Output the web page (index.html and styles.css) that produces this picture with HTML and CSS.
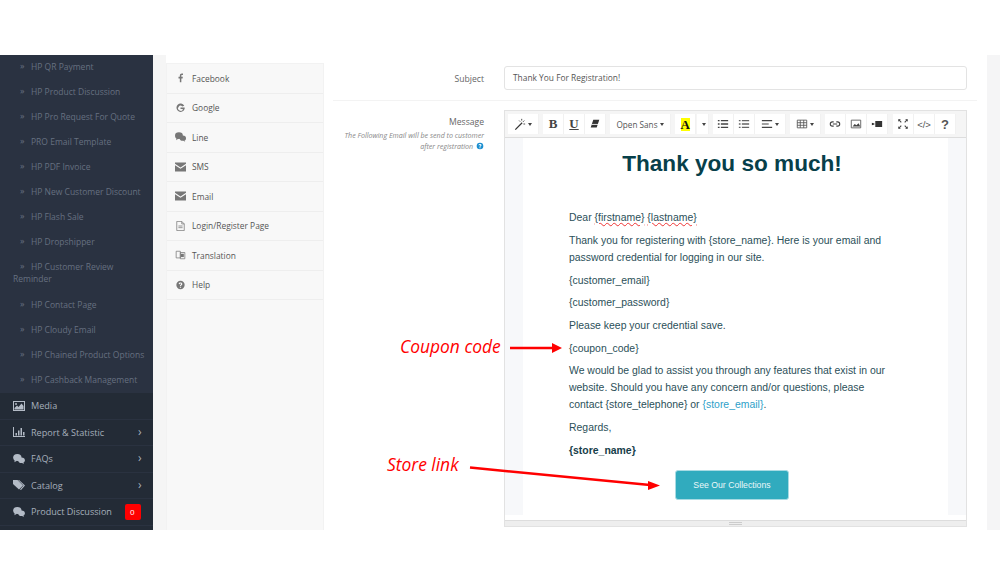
FILE: index.html
```html
<!DOCTYPE html>
<html lang="en">
<head>
<meta charset="utf-8">
<title>Email template</title>
<link rel="stylesheet" href="styles.css">
</head>
<body>
<svg width="0" height="0" class="defs">
  <symbol id="i-mail" viewBox="0 0 12 10"><path d="M0 1.500V0h12v1.500L6 5.500zM0 3l6 4 6-4v7H0z" fill="currentColor"/></symbol>
  <symbol id="i-chat" viewBox="0 0 14 12"><ellipse cx="5" cy="4.300" rx="5" ry="4.200" fill="currentColor"/><path d="M2 7l-.5 3 3-2z" fill="currentColor"/><ellipse cx="10" cy="7.500" rx="4" ry="3.400" fill="currentColor"/><path d="M12 10l1 2-3-1.500z" fill="currentColor"/></symbol>
  <symbol id="i-help" viewBox="0 0 12 12"><path fill-rule="evenodd" d="M6 1a5 5 0 1 0 0 10A5 5 0 0 0 6 1zM5.200 8h1.500v1.300H5.200zM3.800 4.800C3.900 3.500 4.800 3 6 3c1.300 0 2.200.7 2.200 1.800 0 1.500-1.600 1.400-1.600 2.500H5.300c0-1.800 1.400-1.700 1.400-2.500 0-.4-.3-.6-.7-.6-.5 0-.8.3-.8.8z" fill="currentColor"/></symbol>
</svg>
<div class="app">
  <nav class="sidebar">
    <ul class="sub">
      <li>HP QR Payment</li>
      <li>HP Product Discussion</li>
      <li>HP Pro Request For Quote</li>
      <li>PRO Email Template</li>
      <li>HP PDF Invoice</li>
      <li>HP New Customer Discount</li>
      <li>HP Flash Sale</li>
      <li>HP Dropshipper</li>
      <li class="two">HP Customer Review Reminder</li>
      <li>HP Contact Page</li>
      <li>HP Cloudy Email</li>
      <li>HP Chained Product Options</li>
      <li>HP Cashback Management</li>
    </ul>
    <ul class="top">
      <li><svg class="ti" viewBox="0 0 12 10"><path fill-rule="evenodd" d="M0 0h12v10H0zM1 1v8h10V1z" fill="currentColor"/><path d="M1.500 8.500V7L4 4.500 5.500 6l3-3.500 2 2.500v3.500z" fill="currentColor"/><circle cx="3" cy="3" r="1" fill="currentColor"/></svg>Media</li>
      <li><svg class="ti" viewBox="0 0 12 10"><path d="M0 0h1v9h11v1H0zM2.500 6h1.500v2.500H2.500zM5 3.500h1.500v5H5zM7.500 1h1.500v7.500H7.500zM10 5h1.500v3.500H10z" fill="currentColor"/></svg>Report &amp; Statistic<span class="chev">›</span></li>
      <li><svg class="ti"><use href="#i-chat"/></svg>FAQs<span class="chev">›</span></li>
      <li><svg class="ti" viewBox="0 0 12 10"><path d="M0 0h4.500L10 5.500 6 9.500 0 4z" fill="currentColor"/><path d="M6 0l6 5.500L8 10l-1-.5 3.500-4L5 0z" fill="currentColor"/></svg>Catalog<span class="chev">›</span></li>
      <li><svg class="ti"><use href="#i-chat"/></svg>Product Discussion<span class="badge">0</span></li>
    </ul>
  </nav>
  <div class="gutter">
    <ul class="tabs">
      <li><svg class="tic" viewBox="0 0 12 12"><path d="M7 11V6.500h1.500l.3-1.900H7V3.300c0-.6.2-1 1-1h1V.6C8.700.5 8.200.5 7.600.5 6.200.5 5.200 1.400 5.200 3v1.600H3.600v1.900h1.600V11z" fill="currentColor"/></svg>Facebook</li>
      <li><svg class="tic" viewBox="0 0 12 12"><path d="M10.500 3.200A5 5 0 1 0 11 7V5.300H6v1.900h3a3 3 0 1 1-.8-3z" fill="currentColor"/></svg>Google</li>
      <li><svg class="tic"><use href="#i-chat"/></svg>Line</li>
      <li><svg class="tic"><use href="#i-mail"/></svg>SMS</li>
      <li><svg class="tic"><use href="#i-mail"/></svg>Email</li>
      <li><svg class="tic" viewBox="0 0 12 12"><path d="M1.500.5h6l3 3v8h-9zM7.500.5v3h3M3.500 6h5M3.500 8h5" fill="none" stroke="currentColor" stroke-width=".9"/></svg>Login/Register Page</li>
      <li><svg class="tic" viewBox="0 0 12 12"><path d="M.8 1.500h5v8h-5zM5.800 3h5.400v7.500H5.800z" fill="none" stroke="currentColor" stroke-width=".9"/><rect x="6.500" y="4.500" width="3.500" height="4" fill="currentColor"/></svg>Translation</li>
      <li><svg class="tic"><use href="#i-help"/></svg>Help</li>
    </ul>
  </div>
  <main class="main">
    <div class="row row-subject">
      <label class="label">Subject</label>
      <div class="input">Thank You For Registration!</div>
    </div>
    <hr class="rule">
    <div class="row">
      <div class="label">
        Message
        <div class="hint">The Following Email will be send to customer after registration <svg class="q"><use href="#i-help"/></svg></div>
      </div>
      <div class="editor">
        <div class="toolbar">
          <div class="grp"><span class="btn w31"><svg class="bi" viewBox="0 0 14 14"><path d="M1 13l8-8 1 1-8 8z" fill="#333"/><path d="M9 1v2M12 3l-1.500 1.500M13 7h-2M6 3l1.200 1.200" stroke="#333"/></svg><i class="car"></i></span></div>
          <div class="grp"><span class="btn w21 big">B</span><span class="btn w21 big und">U</span><span class="btn w21"><svg class="bi" viewBox="0 0 14 14"><path d="M5 2h7l-3 9H2z" fill="#333"/><path d="M3 7.500h7.500" stroke="#fff"/></svg></span></div>
          <div class="grp"><span class="btn w61 font">Open Sans<i class="car"></i></span></div>
          <div class="grp grp-color"><span class="btn w21"><span class="hl">A</span></span><span class="btn w12"><i class="car"></i></span></div>
          <div class="grp">
            <span class="btn w21"><svg class="bi" viewBox="0 0 14 14"><path d="M1 3h2M1 7h2M1 11h2M4.500 3H13M4.500 7H13M4.500 11H13" stroke="#444" stroke-width="1.500"/></svg></span>
            <span class="btn w21"><svg class="bi" viewBox="0 0 14 14"><path d="M1 3h2M1 7h2M1 11h2M4.500 3H13M4.500 7H13M4.500 11H13" stroke="#666" stroke-width="1.500"/></svg></span>
            <span class="btn w31"><svg class="bi" viewBox="0 0 14 14"><path d="M1 3h12M1 7h8M1 11h12" stroke="#444" stroke-width="1.300"/></svg><i class="car"></i></span>
          </div>
          <div class="grp"><span class="btn w31"><svg class="bi" viewBox="0 0 14 14"><path d="M1.500 2.500h11v9h-11zM1.500 5.500h11M1.500 8.500h11M5 2.500v9M9 2.500v9" fill="none" stroke="#555"/></svg><i class="car"></i></span></div>
          <div class="grp">
            <span class="btn w21"><svg class="bi" viewBox="0 0 14 14"><path d="M5.500 4.500H4a2.500 2.500 0 0 0 0 5h1.500M8.500 4.500H10a2.500 2.500 0 0 1 0 5H8.500M4.500 7h5" fill="none" stroke="#444" stroke-width="1.300"/></svg></span>
            <span class="btn w21"><svg class="bi" viewBox="0 0 14 14"><path d="M1.500 2.500h11v9h-11z" fill="none" stroke="#555"/><path d="M3 10l2.500-3 2 1.500L10 6l2 4z" fill="#444"/></svg></span>
            <span class="btn w21"><svg class="bi" viewBox="0 0 14 14"><path d="M5 3.500h8v7H5zM1 5.500l3 1v1l-3 1z" fill="#333"/></svg></span>
          </div>
          <div class="grp grp-last">
            <span class="btn w21"><svg class="bi" viewBox="0 0 14 14"><path d="M2 2l3 3M12 2L9 5M2 12l3-3M12 12L9 9" stroke="#444" stroke-width="1.300"/><path d="M1.500 1.500h3l-3 3zM12.500 1.500h-3l3 3zM1.500 12.500h3l-3-3zM12.500 12.500h-3l3-3z" fill="#444"/></svg></span>
            <span class="btn w21 code">&lt;/&gt;</span>
            <span class="btn w21 help">?</span>
          </div>
        </div>
        <div class="canvas">
          <div class="strip"></div>
          <article class="mail">
            <h1 class="mail-title">Thank you so much!</h1>
            <p>Dear <span class="sp">{firstname}</span> <span class="sp">{lastname}</span></p>
            <p>Thank you for registering with {store_name}. Here is your email and password credential for logging in our site.</p>
            <p>{customer_email}</p>
            <p>{customer_password}</p>
            <p>Please keep your credential save.</p>
            <p>{coupon_code}</p>
            <p>We would be glad to assist you through any features that exist in our website. Should you have any concern and/or questions, please contact {store_telephone} or <a class="lnk">{store_email}</a>.</p>
            <p>Regards,</p>
            <p><strong>{store_name}</strong></p>
            <div class="cta-wrap"><a class="cta">See Our Collections</a></div>
          </article>
          <div class="strip"></div>
        </div>
        <div class="status"><i class="grip"></i></div>
      </div>
    </div>
  </main>
  <div class="edge"></div>
</div>
<div class="note note-coupon">Coupon code</div>
<div class="note note-store">Store link</div>
<svg class="arrows" viewBox="0 0 1000 585">
  <path d="M510 348H552" stroke="#f00" stroke-width="2.500"/>
  <path d="M552 343l10 5-10 5z" fill="#f00"/>
  <path d="M470 467.500L650 485" stroke="#f00" stroke-width="2.500"/>
  <path d="M648 481l12 4.500-12 4.500z" fill="#f00"/>
</svg>
</body>
</html>
```
FILE: styles.css
```css
* { box-sizing: border-box; }
html, body { margin: 0; padding: 0; background: #fff; }
body { width: 1000px; height: 585px; overflow: hidden; position: relative; padding-top: 55px; font-family: "Open Sans", sans-serif; }
ul { list-style: none; margin: 0; padding: 0; }
.defs { position: absolute; }
.app { display: flex; height: 475px; overflow: hidden; }

.sidebar { width: 153px; flex: none; background: #2a3241; overflow: hidden; display: flex; flex-direction: column; }
.sub li { height: 25px; line-height: 23px; padding-left: 31px; font-size: 8.500px; color: #667080; position: relative; white-space: nowrap; }
.sub li::before { content: "»"; position: absolute; left: 20px; top: -1px; font-size: 9px; }
.sub li.two { height: 38px; line-height: 12px; padding: 6px 0 0 13px; white-space: normal; text-indent: 18px; }
.sub li.two::before { text-indent: 0; top: 5px; }
.top { background: #232b36; flex: 1; }
.top li { height: 26.500px; display: flex; align-items: center; padding-left: 13px; font-size: 9.100px; color: #a6afbb; border-bottom: 1px solid #2a3240; position: relative; }
.ti { width: 12px; height: 10px; margin-right: 6px; flex: none; color: #b3bbc6; }
.chev { position: absolute; left: 138px; top: 5px; font-size: 12px; line-height: 14px; }
.badge { position: absolute; left: 125px; top: 5px; width: 16px; height: 16px; background: #f00; border-radius: 2px; color: #fff; font-size: 8px; line-height: 16px; padding-left: 5px; }

.gutter { width: 171px; flex: none; background: linear-gradient(to right, #f5f5f5 13px, #fff 13px); padding: 8px 0 0 13px; }
.tabs { width: 158px; height: 100%; background: #f8f8f8; border: 1px solid #f2f2f2; border-width: 1px 1px 0 1px; background-clip: padding-box; }
.tabs li { height: 29.500px; display: flex; align-items: center; padding-left: 8px; font-size: 8.400px; color: #555; border-bottom: 1px solid #eeeeee; }
.tic { width: 11px; height: 10px; margin-right: 6px; flex: none; color: #777; }

.main { flex: 1; padding: 11px 9px 0 8px; display: flex; flex-direction: column; }
.row { display: flex; }
.label { width: 152px; flex: none; margin-right: 20px; text-align: right; font-size: 8.600px; color: #666; padding-top: 6px; line-height: 12px; }
.row-subject .label { padding-top: 7px; }
.input { flex: none; width: 463px; height: 24px; border: 1px solid #e3e3e3; border-radius: 3px; font-size: 8.400px; color: #555; line-height: 22px; padding-left: 8px; }
.rule { border: 0; border-top: 1px solid #f3f3f3; width: 644px; margin: 10px 0 9px 1px; }
.hint { font-size: 7.100px; font-style: italic; color: #888; line-height: 10.500px; margin-top: 2px; }
.q { display: inline-block; width: 8px; height: 8px; color: #1b8fd0; vertical-align: -1px; margin-left: 1px; }

.editor { width: 463px; height: 417px; flex: none; border: 1px solid #e2e2e2; display: flex; flex-direction: column; background: #fff; }
.toolbar { height: 27px; flex: none; background: #f5f5f5; border-bottom: 1px solid #ddd; display: flex; gap: 4px; padding: 3px 0 0 3px; }
.grp { display: flex; height: 20px; }
.grp-color { gap: 1px; }
.grp-last { margin-left: 1px; }
.btn { background: #fff; display: flex; align-items: center; justify-content: center; color: #333; border-right: 1px solid #f1f1f1; }
.w31 { width: 31px; }
.w21 { width: 21px; }
.w12 { width: 12px; }
.w61 { width: 61px; }
.bi { width: 12px; height: 12px; }
.car { display: inline-block; width: 0; height: 0; border: 2px solid transparent; border-top: 3px solid #444; border-bottom: 0; margin-left: 2px; }
.big { font-family: "Liberation Serif", serif; font-weight: 700; font-size: 13px; color: #444; }
.und { text-decoration: underline; }
.font { font-size: 8.200px; color: #555; }
.hl { background: #ff0; color: #111; font-family: "Liberation Serif", serif; font-weight: 700; font-size: 13px; width: 9px; height: 13px; line-height: 13px; text-align: center; display: block; }
.code { font-size: 9.500px; color: #555; font-family: "Liberation Sans", sans-serif; }
.help { font-family: "Liberation Sans", sans-serif; font-weight: 700; font-size: 13px; color: #555; }

.canvas { flex: 1; display: flex; overflow: hidden; min-height: 0; }
.strip { width: 18px; flex: none; height: 377px; background: #f7f8fa; }
.mail { flex: 1; padding: 0 53px 0 46px; font-family: "Liberation Sans", sans-serif; font-size: 10.450px; line-height: 17px; color: #2b5059; }
.mail p { margin: 0 0 5.700px; }
.mail-title { margin: 12px 0 31.300px; font-size: 22.600px; line-height: 28px; color: #073f4a; font-weight: 700; text-align: center; }
.sp { text-decoration: underline wavy #e33; text-decoration-thickness: 1px; }
.lnk { color: #2e9fc9; }
.mail strong { color: #16404a; }
.cta-wrap { display: flex; justify-content: center; margin-top: 11px; }
.cta { width: 114px; height: 30px; background: #31abbe; border: 1px solid #a9dbe3; border-radius: 3px; color: #eaf7f9; font-size: 8.700px; line-height: 28px; text-align: center; }
.status { height: 6px; flex: none; background: #eee; border-top: 1px solid #ddd; display: flex; justify-content: center; }
.grip { width: 13px; height: 3px; margin-top: 1px; border-top: 1px solid #ccc; border-bottom: 1px solid #ccc; }

.edge { width: 13px; flex: none; background: #f5f5f6; }

.note { position: absolute; color: #f00; font-style: italic; font-size: 17.400px; line-height: 20px; white-space: nowrap; }
.note-coupon { left: 400px; top: 336px; }
.note-store { left: 387px; top: 454px; }
.arrows { position: absolute; left: 0; top: 0; width: 1000px; height: 585px; pointer-events: none; }
```
